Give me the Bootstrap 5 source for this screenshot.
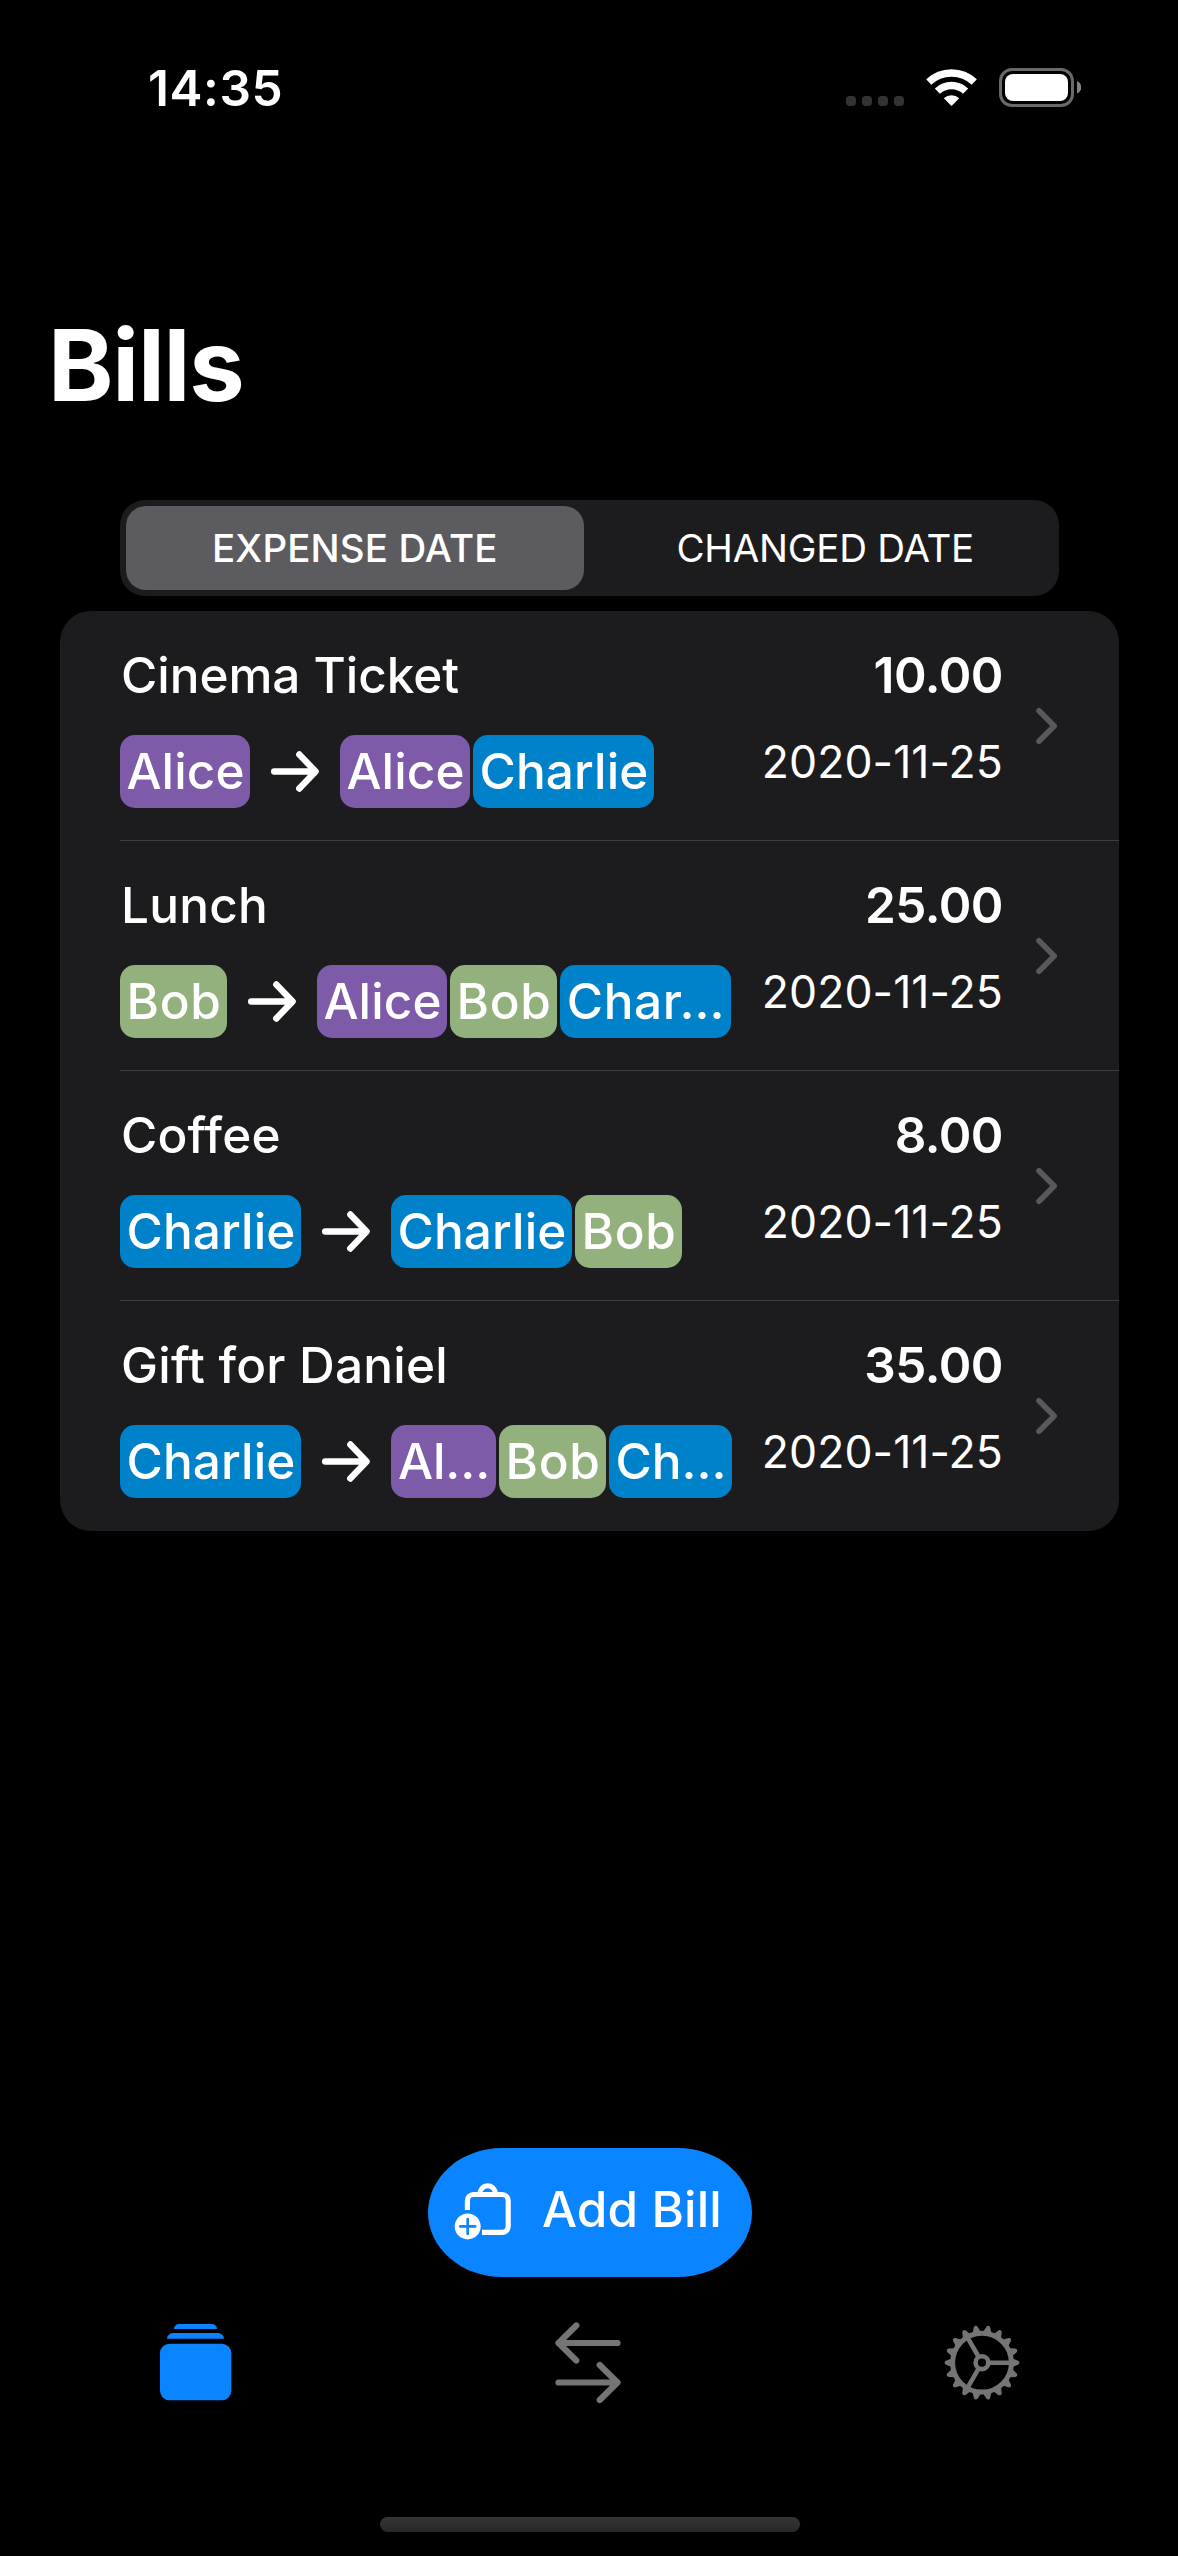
<!DOCTYPE html>
<html lang="en" data-bs-theme="dark">
<head>
<meta charset="utf-8">
<meta name="viewport" content="width=device-width, initial-scale=1">
<title>Bills</title>
<link href="https://cdn.jsdelivr.net/npm/bootstrap@5.3.0/dist/css/bootstrap.min.css" rel="stylesheet">
<style>
  body { background: #000; color: #fff; font-family: Inter, "Liberation Sans", sans-serif; }
  .screen { height: 2556px; overflow: hidden; }
  svg { display: block; flex: none; }

  .status-bar { height: 176px; padding: 0 97px 0 148px; }
  .clock { font-size: 49.5px; font-weight: 600; letter-spacing: .6px; line-height: 60px; }

  .page-title { font-size: 99px; font-weight: 700; letter-spacing: -1.2px; line-height: 120px; margin: 129px 0 75px 48px; }

  .segments { height: 96px; margin: 0 119px 15px 120px; border-radius: 25px; background: #1c1c1e; }
  .segment { flex: 1 1 0; padding: 6px 5px 6px 6px; font-size: 38.5px; line-height: 84px; letter-spacing: -.25px; text-align: center; }
  .segment span { display: block; border-radius: 20px; }
  .segment.active { padding-right: 7px; }
  .segment.active span { background: #5c5b60; font-weight: 500; letter-spacing: .1px; }

  .bills { margin: 0 59px 0 60px; border-radius: 31px; background: #1c1c1e; overflow: hidden; }
  .bill { height: 230px; margin-left: 60px; padding: 34px 61px 0 0; background: transparent; color: #fff; border: 0; border-bottom: 1px solid #3d3d41; border-radius: 0; }
  .bill:last-child { border-bottom: 0; }
  .bill-name { font-size: 49.5px; font-weight: 500; line-height: 60px; letter-spacing: .2px; margin-bottom: 30px; padding-left: 1px; }
  .bill:first-child .bill-name { letter-spacing: -.05px; }
  .amount { font-size: 49.5px; font-weight: 600; line-height: 60px; letter-spacing: -.5px; margin-bottom: 32px; }
  .date { font-size: 44.5px; line-height: 51px; letter-spacing: .1px; }
  .chevron { margin: 62px 0 0 33px; }

  .people { gap: 3px; }
  .person { height: 73px; padding: 0 0 0 1px; border-radius: 15px; font-size: 49.5px; font-weight: 500; line-height: 73px; letter-spacing: .1px; }
  .arrow { margin: 0 18px; }
  .alice { width: 130px; background: #7d5ba9; }
  .bob { width: 107px; background: #93b17d; letter-spacing: .7px; }
  .charlie { width: 181px; background: #0082ca; }
  .alice.short { width: 105px; letter-spacing: -.2px; }
  .charlie.short { width: 171px; letter-spacing: .6px; }
  .charlie.shorter { width: 123px; letter-spacing: 0; }

  .add-bill { width: 324px; height: 129px; margin: auto auto 37px 428px; padding: 31px 0 0 26px; border: 0; border-radius: 74px / 64.5px; background: #0a84ff; color: #fff; font-size: 49.5px; font-weight: 500; line-height: 60px; letter-spacing: .1px; gap: 30px; }
  .add-bill svg { margin-top: 3px; }
  .tabs { height: 203px; }
  .home-indicator { width: 420px; height: 15px; margin: 0 auto 24px 380px; border-radius: 8px; background: linear-gradient(#353535, #282828); }
</style>
<script src="https://cdn.jsdelivr.net/npm/bootstrap@5.3.0/dist/js/bootstrap.bundle.min.js"></script>
</head>
<body>
<svg width="0" height="0" class="position-absolute" aria-hidden="true">
  <symbol id="arrow" viewBox="0 0 48 41"><path d="M3.2 20.5H44M28.3 3.5 44.6 20.5 28.3 37.5" fill="none" stroke="#fff" stroke-width="6.4" stroke-linecap="round" stroke-linejoin="round"/></symbol>
  <symbol id="chevron" viewBox="0 0 22 38"><path d="M3 3.8 18.2 19 3 34.2" fill="none" stroke="#59595b" stroke-width="5.6" stroke-linecap="round" stroke-linejoin="round"/></symbol>
</svg>

<div class="screen d-flex flex-column">
  <header class="status-bar d-flex align-items-center justify-content-between">
    <div class="clock">14:35</div>
    <svg width="235" height="40" viewBox="846 68 235 40">
      <g fill="#333"><rect x="846" y="96" width="10" height="10" rx="3.8"/><rect x="862" y="96" width="10" height="10" rx="3.8"/><rect x="878" y="96" width="10" height="10" rx="3.8"/><rect x="894" y="96" width="10" height="10" rx="3.8"/></g>
      <g transform="translate(951.5 106)">
        <path d="M-22.8-24A33.2 33.2 0 0 1 22.8-24M-14.1-14.9A20.5 20.5 0 0 1 14.1-14.9" fill="none" stroke="#fff" stroke-width="7.4"/>
        <path d="M0 0-7.7-7.8A11.3 11.3 0 0 1 7.7-7.8Z" fill="#fff"/>
      </g>
      <rect x="1000.5" y="69.5" width="72" height="36" rx="11.5" fill="none" stroke="#696969" stroke-width="3"/>
      <rect x="1005" y="74" width="63" height="27" rx="8" fill="#fff"/>
      <path d="M1077 81a6.8 6.8 0 0 1 0 12.6Z" fill="#848484"/>
    </svg>
  </header>

  <h1 class="page-title">Bills</h1>

  <div class="segments d-flex">
    <div class="segment active"><span>EXPENSE DATE</span></div>
    <div class="segment"><span>CHANGED DATE</span></div>
  </div>

  <div class="bills list-group list-group-flush">
    <div class="bill list-group-item d-flex">
      <div class="flex-grow-1">
        <div class="bill-name">Cinema Ticket</div>
        <div class="people d-flex align-items-center">
          <span class="person badge alice">Alice</span>
          <svg class="arrow" width="48" height="41"><use href="#arrow"/></svg>
          <span class="person badge alice">Alice</span>
          <span class="person badge charlie">Charlie</span>
        </div>
      </div>
      <div class="text-end"><div class="amount">10.00</div><div class="date">2020-11-25</div></div>
      <svg class="chevron" width="22" height="38"><use href="#chevron"/></svg>
    </div>
    <div class="bill list-group-item d-flex">
      <div class="flex-grow-1">
        <div class="bill-name">Lunch</div>
        <div class="people d-flex align-items-center">
          <span class="person badge bob">Bob</span>
          <svg class="arrow" width="48" height="41"><use href="#arrow"/></svg>
          <span class="person badge alice">Alice</span>
          <span class="person badge bob">Bob</span>
          <span class="person badge charlie short">Char…</span>
        </div>
      </div>
      <div class="text-end"><div class="amount">25.00</div><div class="date">2020-11-25</div></div>
      <svg class="chevron" width="22" height="38"><use href="#chevron"/></svg>
    </div>
    <div class="bill list-group-item d-flex">
      <div class="flex-grow-1">
        <div class="bill-name">Coffee</div>
        <div class="people d-flex align-items-center">
          <span class="person badge charlie">Charlie</span>
          <svg class="arrow" width="48" height="41"><use href="#arrow"/></svg>
          <span class="person badge charlie">Charlie</span>
          <span class="person badge bob">Bob</span>
        </div>
      </div>
      <div class="text-end"><div class="amount">8.00</div><div class="date">2020-11-25</div></div>
      <svg class="chevron" width="22" height="38"><use href="#chevron"/></svg>
    </div>
    <div class="bill list-group-item d-flex">
      <div class="flex-grow-1">
        <div class="bill-name">Gift for Daniel</div>
        <div class="people d-flex align-items-center">
          <span class="person badge charlie">Charlie</span>
          <svg class="arrow" width="48" height="41"><use href="#arrow"/></svg>
          <span class="person badge alice short">Al…</span>
          <span class="person badge bob">Bob</span>
          <span class="person badge charlie shorter">Ch…</span>
        </div>
      </div>
      <div class="text-end"><div class="amount">35.00</div><div class="date">2020-11-25</div></div>
      <svg class="chevron" width="22" height="38"><use href="#chevron"/></svg>
    </div>
  </div>

  <button type="button" class="add-bill d-flex align-items-start">
    <svg width="58" height="58" viewBox="54 62 58 58">
      <path d="M67.4 90V80.5a6 6 0 0 1 6-6H102.2a6 6 0 0 1 6 6V106.3a6 6 0 0 1-6 6H82" fill="none" stroke="#fff" stroke-width="5.2"/>
      <path d="M79.6 74.5A8.1 8.7 0 0 1 95.8 74.5" fill="none" stroke="#fff" stroke-width="5"/>
      <circle cx="67.7" cy="106.4" r="13" fill="#fff"/>
      <path d="M60.3 106.4h14.8M67.7 99v14.8" stroke="#0a84ff" stroke-width="2.7" stroke-linecap="round"/>
    </svg>
    <span>Add Bill</span>
  </button>

  <nav class="tabs row g-0 align-items-start">
    <div class="col d-flex justify-content-center">
      <svg width="80" height="90" viewBox="156 2314 80 90" fill="#0a84ff">
        <path d="M174 2329a5 5 0 0 1 5-5h33a5 5 0 0 1 5 5ZM167 2338.7a6 5.7 0 0 1 6-5.7h45a6 5.7 0 0 1 6 5.7Z"/>
        <rect x="160" y="2343.7" width="71.3" height="56.5" rx="9.5"/>
      </svg>
    </div>
    <div class="col d-flex justify-content-center">
      <svg width="80" height="90" viewBox="549 2314 80 90" fill="none" stroke="#757575" stroke-width="6.2" stroke-linecap="round" stroke-linejoin="round">
        <path d="M617.5 2343H558.5M576.3 2325.5 558.5 2343 576.3 2360.5M558.5 2382.5H617.5M599.7 2365 617.5 2382.5 599.7 2400"/>
      </svg>
    </div>
    <div class="col d-flex justify-content-center">
      <svg width="80" height="90" viewBox="-40 -48.7 80 90" fill="none" stroke="#757575">
        <circle r="29.4" stroke-width="5"/>
        <circle r="6.4" stroke-width="4.6"/>
        <path d="M8 0H28M-4-6.93-14-24.25M-4 6.93-14 24.25" stroke-width="4.6"/>
        <g id="teeth" fill="#757575" stroke="none"></g>
      </svg>
    </div>
  </nav>
  <div class="home-indicator flex-shrink-0"></div>
</div>
<script>
  // Eighteen identical teeth, one every 20 degrees
  const teeth = document.getElementById('teeth');
  for (let a = 0; a < 360; a += 20) {
    const p = document.createElementNS('http://www.w3.org/2000/svg', 'path');
    p.setAttribute('d', 'M30.5-4.3 36-2Q37.4-1.3 37.4 0T36 2L30.5 4.3Z');
    p.setAttribute('transform', `rotate(${a})`);
    teeth.appendChild(p);
  }
</script>
</body>
</html>
